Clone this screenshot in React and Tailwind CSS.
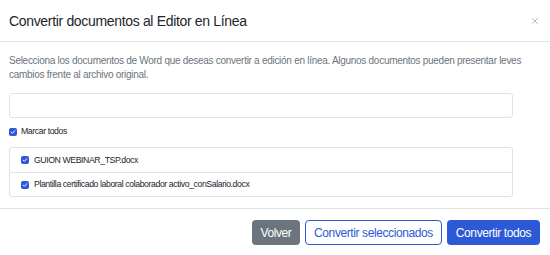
import { X } from "lucide-react";

const docs = [
  "GUION WEBINAR_TSP.docx",
  "Plantilla certificado laboral colaborador activo_conSalario.docx",
];

function Check() {
  return (
    <span className="flex h-[8px] w-[8px] shrink-0 items-center justify-center rounded-[2px] bg-[#2c5ad7]">
      <svg viewBox="0 0 10 10" className="h-[6px] w-[6px]">
        <path d="M2 5.2l2 2 4-4.4" fill="none" stroke="white" strokeWidth="1.6" strokeLinecap="round" strokeLinejoin="round" />
      </svg>
    </span>
  );
}

export default function App() {
  return (
    <div
      className="h-[255px] w-[550px] bg-white text-[#212529]"
      style={{ fontFamily: '"Liberation Sans", Arial, sans-serif' }}
    >
      <div className="flex h-[42px] items-center justify-between border-b border-[#dee2e6] pl-[9px] pr-[10px]">
        <h1 className="text-[14px] leading-none tracking-[-0.33px]">Convertir documentos al Editor en Línea</h1>
        <X className="h-[10px] w-[10px] text-[#8a8a8a]" strokeWidth={1.5} />
      </div>

      <div className="px-[9px] pt-[12px]">
        <p className="text-[10px] leading-[14px] tracking-[-0.28px] text-[#6c757d]">
          Selecciona los documentos de Word que deseas convertir a edición en línea. Algunos documentos pueden presentar leves
          cambios frente al archivo original.
        </p>
        <input
          type="text"
          className="mt-[11px] block h-[25px] w-[504px] rounded-[3px] border border-[#dee2e6]"
        />
        <label className="mt-[7px] flex items-center gap-[4px] text-[8.7px] tracking-[-0.4px]">
          <Check />
          Marcar todos
        </label>
        <ul className="mt-[9px] w-[504px] rounded-[3px] border border-[#dee2e6]">
          {docs.map((d, i) => (
            <li
              key={d}
              className={
                "flex h-[24px] items-center gap-[5px] pl-[11px] text-[8.7px] tracking-[-0.4px] " +
                (i > 0 ? "border-t border-[#dee2e6]" : "")
              }
            >
              <Check />
              {d}
            </li>
          ))}
        </ul>
      </div>

      <div className="mt-[11px] flex justify-end gap-[5px] border-t border-[#dee2e6] pr-[10px] pt-[11px]">
        <button className="h-[25px] w-[48px] rounded-[4px] bg-[#6c757d] text-[12px] tracking-[-0.4px] text-white">Volver</button>
        <button className="h-[25px] w-[137px] rounded-[4px] border border-[#2c5ad7] text-[12px] tracking-[-0.4px] text-[#2c5ad7]">
          Convertir seleccionados
        </button>
        <button className="h-[25px] w-[93px] rounded-[4px] bg-[#2c5ad7] text-[12px] tracking-[-0.4px] text-white">Convertir todos</button>
      </div>
    </div>
  );
}
